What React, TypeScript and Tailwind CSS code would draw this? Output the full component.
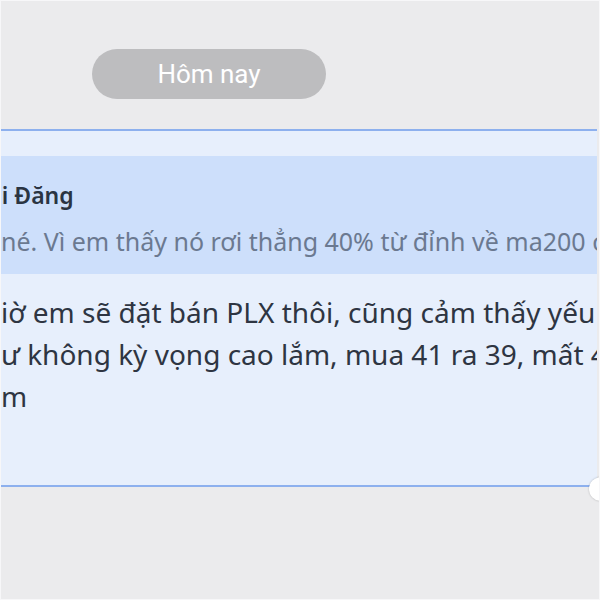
export default function App() {
  const lines = [
    'iờ em sẽ đặt bán PLX thôi, cũng cảm thấy yếu',
    'ư không kỳ vọng cao lắm, mua 41 ra 39, mất 4',
    'm',
  ];
  return (
    <div className="relative w-[600px] h-[600px] overflow-hidden bg-[#ebebed] border border-[#f7f7f9]">
      <div className="pt-[48px] pl-[91px]">
        <div className="w-[234px] h-[50px] rounded-full bg-[#bdbdbf] flex items-center justify-center text-white text-[26px] font-['Roboto',sans-serif]">
          Hôm nay
        </div>
      </div>
      <div className="mt-[30px] w-[596px] h-[358px] border-y-2 border-[#8db0ee] bg-[#e7effc] pt-[25px] font-['Noto_Sans',sans-serif] overflow-hidden">
        <div className="h-[118px] bg-[#cddffb] pt-[24px] whitespace-nowrap overflow-hidden">
          <div className="ml-[-30px] text-[23px] leading-[30px] font-semibold text-[#2a3442]">Hải Đăng</div>
          <div className="mt-[15px] text-[25px] leading-[32px] text-[#6b7990]">né. Vì em thấy nó rơi thẳng 40% từ đỉnh về ma200 c</div>
        </div>
        <div className="pt-[17px] whitespace-nowrap">
          {lines.map(l => (
            <div key={l} className="text-[28px] leading-[42px] text-[#2e3542]">{l}</div>
          ))}
        </div>
      </div>
      <div className="absolute left-[588px] top-[476px] w-[24px] h-[24px] rounded-full bg-white shadow-[0_0_2px_rgba(0,0,0,0.25)]" />
    </div>
  );
}
